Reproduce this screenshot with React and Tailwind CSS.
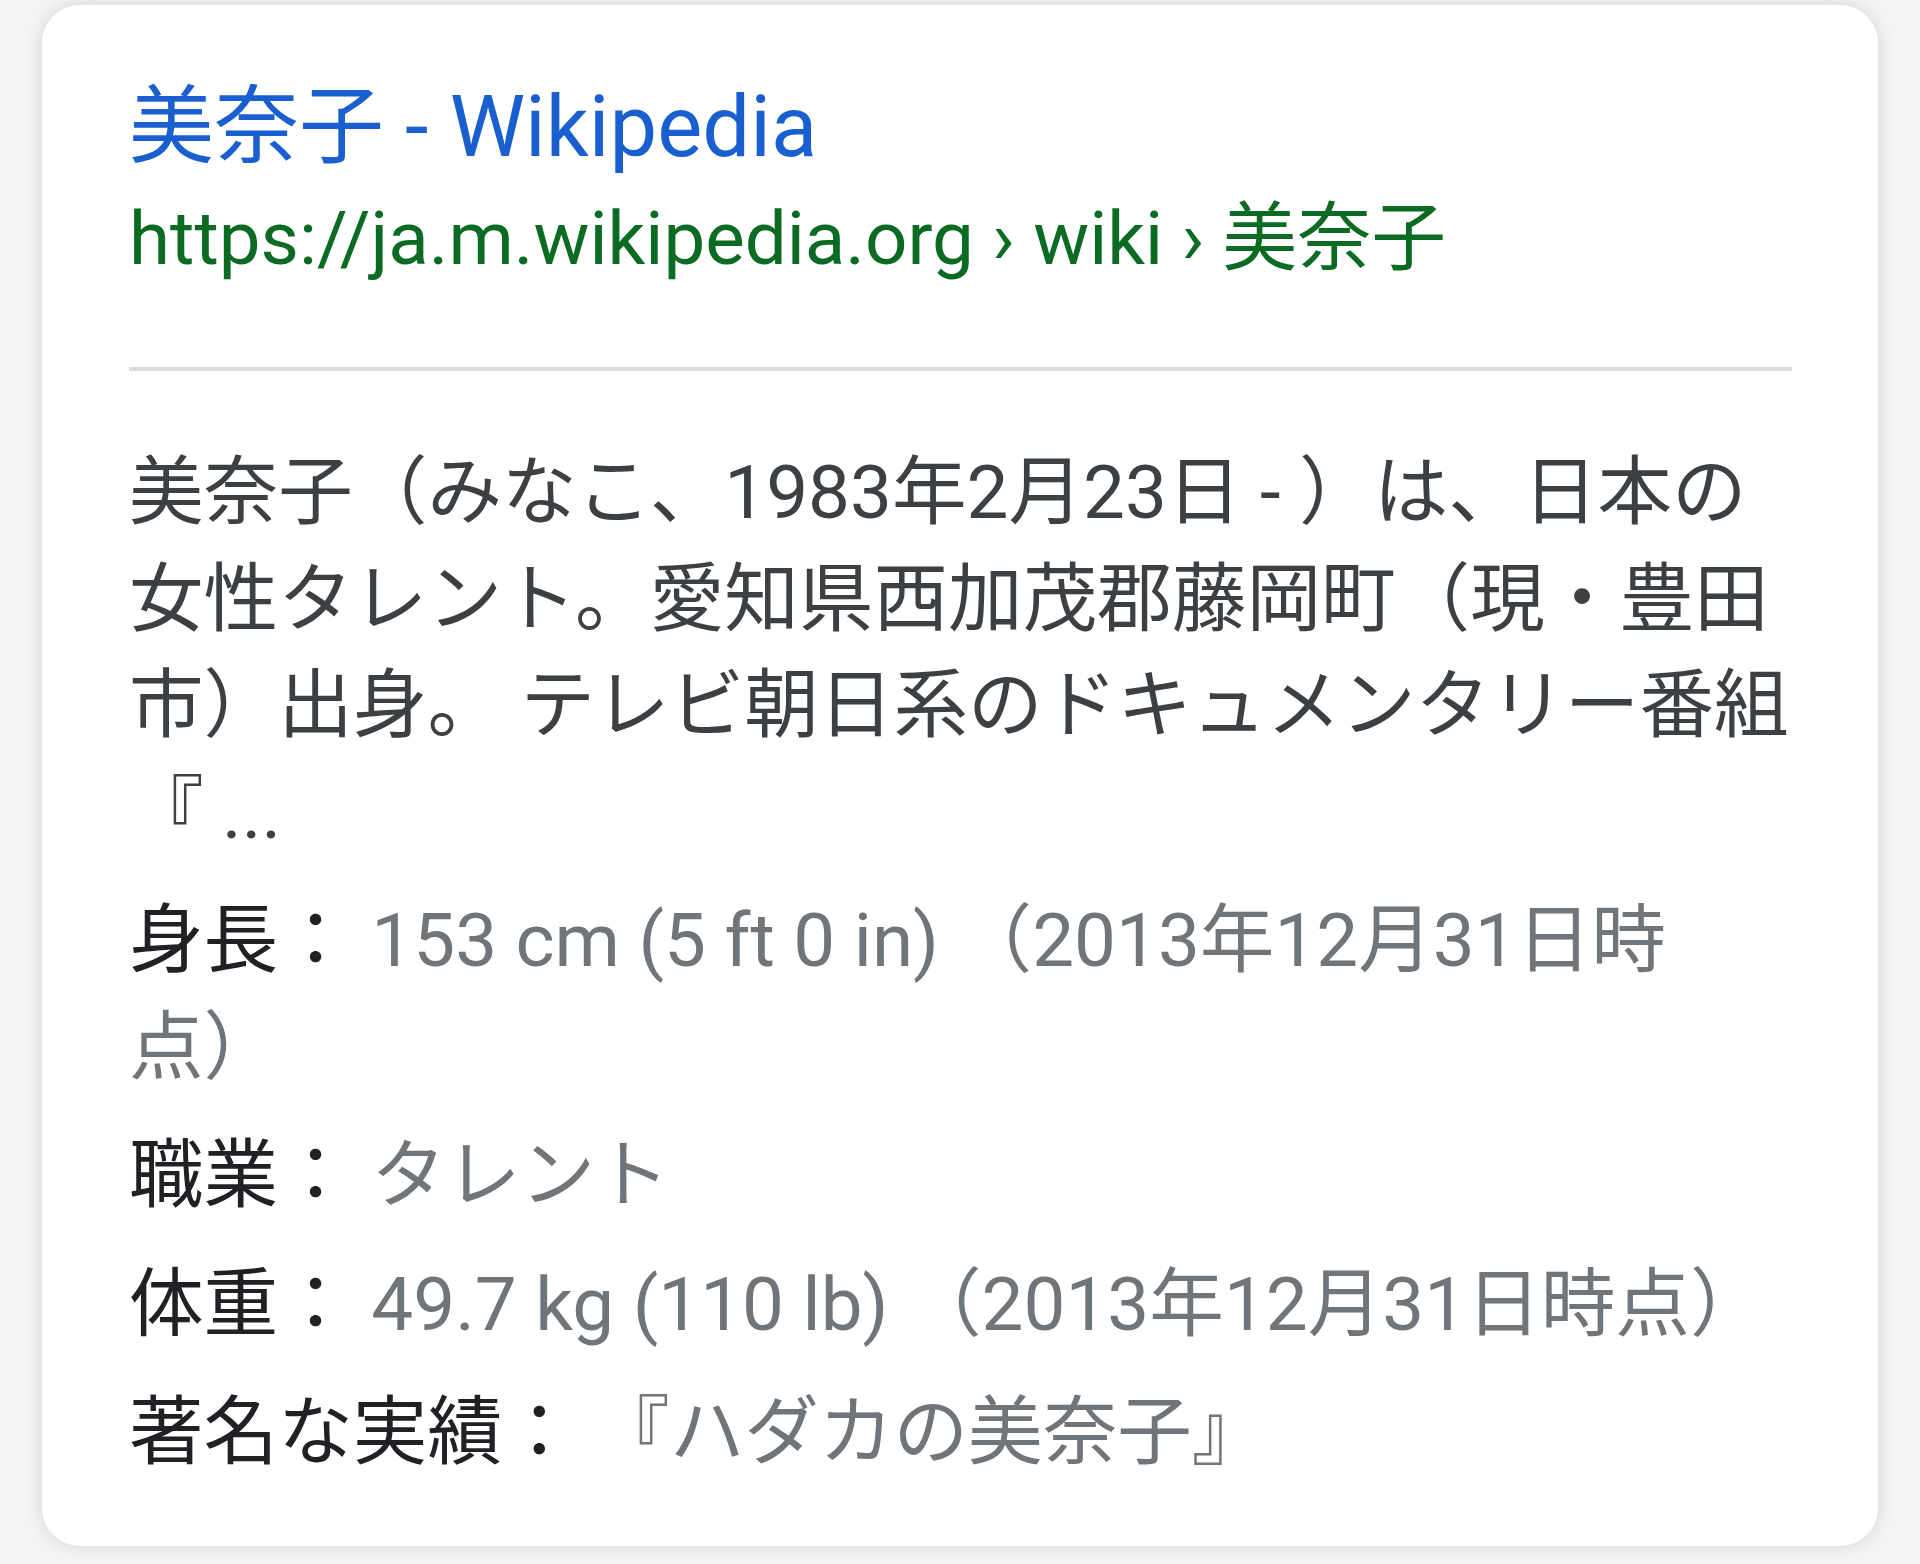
export default function App() {
  const font = { fontFamily: 'Roboto, "Noto Sans CJK JP", sans-serif' };
  return (
    <div className="w-[1920px] h-[1564px] bg-[#f4f4f4] overflow-hidden pt-[5px] pl-[42px]" style={font}>
      <div className="w-[1836px] h-[1541px] bg-white rounded-[38px] shadow-[0_0_18px_rgba(0,0,0,0.13)] pt-[72px] pl-[87px] pr-[84px]">
        <div className="text-[85px] leading-[100px] text-[#1a5fcf] whitespace-nowrap">美奈子 - Wikipedia</div>
        <div className="mt-[6px] text-[74.5px] leading-[111px] text-[#0b6b22] whitespace-nowrap">
          https://ja.m.wikipedia.org › wiki › 美奈子
        </div>
        <div className="mt-[73px] mr-[2px] h-[4px] bg-[#dadce0]"></div>
        <div className="mt-[69px] text-[74.6px] leading-[106.5px] text-[#3c4043]">
          美奈子（みなこ、1983年2月23日 - ）は、日本の女性タレント。愛知県西加茂郡藤岡町（現・豊田市）出身。 テレビ朝日系のドキュメンタリー番組『 ...
        </div>
        <div className="mt-[22px] flex flex-col gap-[22px] text-[74.6px] leading-[106.5px]">
          <div className="text-[#202124]">
            身長： <span className="text-[#70757a]">153 cm (5 ft 0 in) （2013年12月31日時<br />点）</span>
          </div>
          <div className="text-[#202124]">
            職業： <span className="text-[#70757a]">タレント</span>
          </div>
          <div className="text-[#202124]">
            体重： <span className="text-[#70757a]">49.7 kg (110 lb) （2013年12月31日時点）</span>
          </div>
          <div className="text-[#202124]">
            著名な実績： <span className="text-[#70757a]">『ハダカの美奈子』</span>
          </div>
        </div>
      </div>
    </div>
  );
}
